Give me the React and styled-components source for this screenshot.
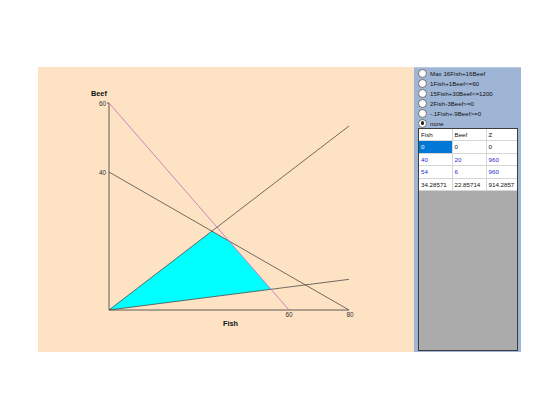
import React from "react";
import styled, { createGlobalStyle } from "styled-components";

const GlobalStyle = createGlobalStyle`
  body {
    margin: 0;
    background: #fff;
    font-family: "Liberation Sans", Arial, sans-serif;
  }
`;

const Page = styled.div`
  padding: 67px 0 0 38px;
`;

const Window = styled.div`
  display: flex;
  width: 483px;
  height: 285px;
`;

const ChartPane = styled.div`
  width: 376px;
  height: 100%;
  background: #fde3c4;
`;

const SidePane = styled.div`
  width: 107px;
  height: 100%;
  box-sizing: border-box;
  background: #9fb5d5;
  border-top: 1px solid #b9c9e0;
  padding: 0 3px 1px 4px;
  display: flex;
  flex-direction: column;
`;

const RadioRow = styled.label`
  display: flex;
  align-items: center;
  gap: 3px;
  height: 10px;
  font-size: 6.2px;
  color: #111;
  white-space: nowrap;
`;

const RadioDot = styled.span`
  width: 7px;
  height: 7px;
  border-radius: 50%;
  border: 0.6px solid #6f6f6f;
  background: #fff;
  display: flex;
  align-items: center;
  justify-content: center;
  flex-shrink: 0;

  &::after {
    content: "";
    width: 3.5px;
    height: 3.5px;
    border-radius: 50%;
    background: ${(p) => (p.$on ? "#222" : "transparent")};
  }
`;

const Grid = styled.div`
  flex: 1;
  border: 1px solid #3c3c3c;
  background: #ababab;
`;

const Table = styled.table`
  width: 100%;
  border-collapse: collapse;
  background: #fff;
  font-size: 6.2px;
`;

const Cell = styled.td`
  height: 11.5px;
  padding: 0 0 0 2px;
  border: 1px solid #d6d6d6;
  color: ${(p) => (p.$sel ? "#fff" : p.$blue ? "#2a2ad0" : "#111")};
  background: ${(p) => (p.$sel ? "#0078d7" : "#fff")};
  &:first-child { border-left: none; }
  &:last-child { border-right: none; }
`;

const HeadCell = styled(Cell).attrs({ as: "th" })`
  height: 11px;
  font-weight: normal;
  text-align: left;
  border-top: none;
`;

const AxisText = styled.text`
  font-family: "Liberation Sans", Arial, sans-serif;
  font-size: 6.4px;
  fill: #333;
`;

const AxisTitle = styled.text`
  font-family: "Liberation Sans", Arial, sans-serif;
  font-size: 7.3px;
  font-weight: bold;
  fill: #111;
`;

// pixels per unit on each axis, origin inside the chart pane
const X = (f) => 71 + f * 3;
const Y = (b) => 243 - b * 3.45;

const constraints = [
  { label: "Max 16Fish+16Beef" },
  { label: "1Fish+1Beef<=60" },
  { label: "15Fish+30Beef<=1200" },
  { label: "2Fish-3Beef>=0" },
  { label: "-.1Fish+.9Beef>=0" },
  { label: "none", on: true },
];

const rows = [
  { v: ["0", "0", "0"], first: true },
  { v: ["40", "20", "960"], blue: true },
  { v: ["54", "6", "960"], blue: true },
  { v: ["34.28571", "22.85714", "914.2857"] },
];

const region = [
  [0, 0],
  [34.2857, 22.8571],
  [40, 20],
  [54, 6],
];

const Chart = () => (
  <svg width="376" height="285">
    <polygon
      points={region.map(([f, b]) => `${X(f)},${Y(b)}`).join(" ")}
      fill="#00ffff"
    />
    <path
      d={`M${X(0) - 2} ${Y(60)} H${X(0)} V${Y(0)} H${X(80)}`}
      fill="none"
      stroke="#5e5a58"
      strokeWidth="1"
    />
    <line x1={X(0)} y1={Y(40)} x2={X(80)} y2={Y(0)} stroke="#4e4a48" strokeWidth="0.8" />
    <line x1={X(0)} y1={Y(0)} x2={X(80)} y2={Y(53.333)} stroke="#4e4a48" strokeWidth="0.8" />
    <line x1={X(0)} y1={Y(0)} x2={X(80)} y2={Y(8.889)} stroke="#4e4a48" strokeWidth="0.8" />
    <line x1={X(0)} y1={Y(60)} x2={X(60)} y2={Y(0)} stroke="#c46ac4" strokeWidth="0.8" />

    <AxisTitle x="53" y="29">Beef</AxisTitle>
    <AxisText x="68" y="38.5" textAnchor="end">60</AxisText>
    <AxisText x="68" y="108" textAnchor="end">40</AxisText>
    <AxisText x={X(60)} y="250" textAnchor="middle">60</AxisText>
    <AxisText x={X(80) + 1} y="250" textAnchor="middle">80</AxisText>
    <AxisTitle x="192.5" y="258.5" textAnchor="middle">Fish</AxisTitle>
  </svg>
);

export default function App() {
  return (
    <>
      <GlobalStyle />
      <Page>
        <Window>
          <ChartPane>
            <Chart />
          </ChartPane>
          <SidePane>
            {constraints.map((c) => (
              <RadioRow key={c.label}>
                <RadioDot $on={c.on} />
                {c.label}
              </RadioRow>
            ))}
            <Grid>
              <Table>
                <colgroup>
                  <col style={{ width: "33px" }} />
                  <col style={{ width: "34px" }} />
                  <col />
                </colgroup>
                <thead>
                  <tr>
                    <HeadCell>Fish</HeadCell>
                    <HeadCell>Beef</HeadCell>
                    <HeadCell>Z</HeadCell>
                  </tr>
                </thead>
                <tbody>
                  {rows.map((r, i) => (
                    <tr key={i}>
                      {r.v.map((v, j) => (
                        <Cell key={j} $blue={r.blue} $sel={r.first && j === 0}>
                          {v}
                        </Cell>
                      ))}
                    </tr>
                  ))}
                </tbody>
              </Table>
            </Grid>
          </SidePane>
        </Window>
      </Page>
    </>
  );
}
